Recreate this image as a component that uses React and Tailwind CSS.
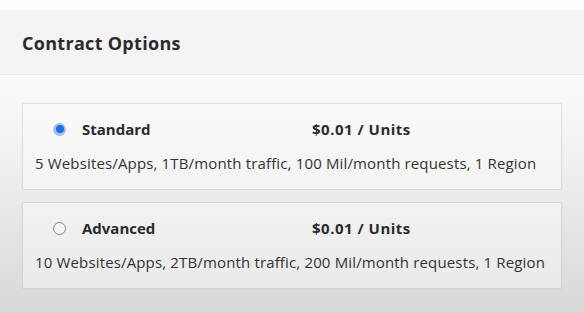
import React from "react";

function Radio({ checked }) {
  return checked ? (
    <span className="flex h-[13px] w-[13px] items-center justify-center rounded-full bg-[#9ec2f0]">
      <span className="h-[8px] w-[8px] rounded-full bg-[#1f6fe0]" />
    </span>
  ) : (
    <span className="h-[13px] w-[13px] rounded-full border-[1.5px] border-[#8a8a8a] bg-white/40" />
  );
}

function Option({ checked, name, price, desc }) {
  return (
    <div className="mx-[22px] flex h-[87px] flex-col rounded-[2px] border border-black/10 bg-white/40 shadow-[0_0_2px_rgba(0,0,0,0.06)]">
      <div className="flex h-[48px] items-center pl-[30px] pt-[2px]">
        <Radio checked={checked} />
        <span className="ml-[16px] w-[230px] text-[15px] font-bold text-[#2b2b2b]">{name}</span>
        <span className="text-[15px] font-bold tracking-[0.5px] text-[#2b2b2b]">{price}</span>
      </div>
      <div className="pl-[12px] text-[15px] tracking-[0.15px] text-[#333]">{desc}</div>
    </div>
  );
}

export default function App() {
  return (
    <div
      className="flex h-[313px] w-[584px] flex-col overflow-hidden bg-[linear-gradient(180deg,#fcfcfc_0%,#f9f9f9_30%,#ececec_60%,#d8d8d8_100%)]"
      style={{ fontFamily: '"Open Sans", "Noto Sans", sans-serif' }}
    >
      <div className="h-[10px] bg-white/60" />
      <div className="flex h-[65px] items-center border-b border-black/[0.04] bg-[#f4f4f4] pl-[22px] pt-[2px]">
        <h1 className="text-[18px] font-bold tracking-[0.3px] text-[#2b2b2b]">Contract Options</h1>
      </div>
      <div className="flex flex-col gap-[12px] pt-[28px]">
        <Option
          checked
          name="Standard"
          price="$0.01 / Units"
          desc="5 Websites/Apps, 1TB/month traffic, 100 Mil/month requests, 1 Region"
        />
        <Option
          name="Advanced"
          price="$0.01 / Units"
          desc="10 Websites/Apps, 2TB/month traffic, 200 Mil/month requests, 1 Region"
        />
      </div>
    </div>
  );
}
